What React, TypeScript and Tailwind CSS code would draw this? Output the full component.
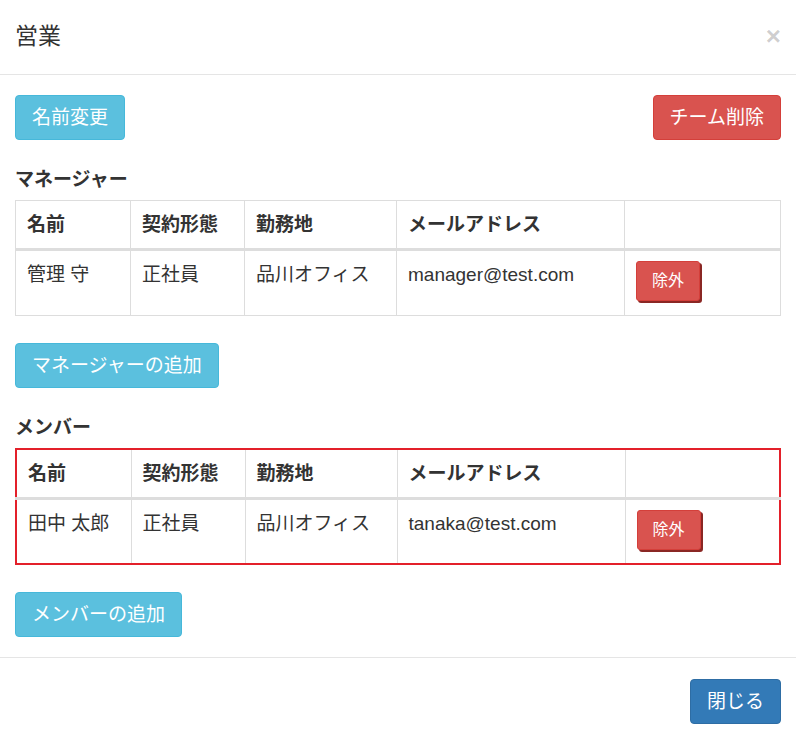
import React from "react";

type Person = { name: string; type: string; office: string; email: string };

const managers: Person[] = [
  { name: "管理 守", type: "正社員", office: "品川オフィス", email: "manager@test.com" },
];

const members: Person[] = [
  { name: "田中 太郎", type: "正社員", office: "品川オフィス", email: "tanaka@test.com" },
];

const headers = ["名前", "契約形態", "勤務地", "メールアドレス", ""];

function PeopleTable({ rows, highlight }: { rows: Person[]; highlight?: boolean }) {
  // the red frame is 1px wider, so the row gives up 1px to keep the height
  const rowH = highlight ? "h-[65px]" : "h-[66px]";
  return (
    <table
      className={
        "w-full table-fixed border-collapse " +
        (highlight ? "border-2 border-[#e3202a]" : "border border-[#ddd]")
      }
    >
      <colgroup>
        <col className="w-[115px]" />
        <col className="w-[114px]" />
        <col className="w-[152px]" />
        <col className="w-[228px]" />
        <col />
      </colgroup>
      <thead>
        <tr>
          {headers.map((h, i) => (
            <th
              key={i}
              className="border-x border-t border-b-[3px] border-[#ddd] px-[11px] py-[10px] text-left align-bottom text-[19px] font-bold leading-[27px] text-[#333]"
            >
              {h}
            </th>
          ))}
        </tr>
      </thead>
      <tbody>
        {rows.map((r) => (
          <tr key={r.email}>
            {[r.name, r.type, r.office, r.email].map((v, i) => (
              <td
                key={i}
                className={
                  rowH +
                  " border border-[#ddd] px-[11px] py-[10px] align-top text-[19px] leading-[27px] text-[#333]"
                }
              >
                {v}
              </td>
            ))}
            <td className={rowH + " border border-[#ddd] px-[11px] pt-[10px] align-top"}>
              <button className="rounded-[3px] border border-[#d43f3a] bg-[#d9534f] px-[15px] py-[8px] text-[16px] leading-[22px] text-white shadow-[2px_2px_0_#8a2724]">
                除外
              </button>
            </td>
          </tr>
        ))}
      </tbody>
    </table>
  );
}

function Btn({ children, tone }: { children: React.ReactNode; tone: "info" | "danger" | "primary" }) {
  const tones = {
    info: "bg-[#5bc0de] border-[#46b8da]",
    danger: "bg-[#d9534f] border-[#d43f3a]",
    primary: "bg-[#337ab7] border-[#2e6da4]",
  };
  return (
    <button
      className={
        "rounded-[4px] border px-[16px] py-[8px] text-[19px] leading-[27px] text-white " + tones[tone]
      }
    >
      {children}
    </button>
  );
}

export default function App() {
  return (
    <div
      className="min-h-screen w-[796px] bg-white text-[#333]"
      style={{ fontFamily: '"Liberation Sans", "Noto Sans CJK JP", sans-serif' }}
    >
      {/* header */}
      <div className="flex h-[75px] items-center justify-between border-b border-[#e5e5e5] px-[15px] pb-[3px]">
        <h4 className="text-[23px] font-normal leading-[32px] text-[#333]">営業</h4>
        <button className="text-[26px] font-bold leading-none text-black/20">×</button>
      </div>

      {/* body */}
      <div className="px-[15px] pt-[20px] pb-[20px]">
        <div className="flex items-start justify-between">
          <Btn tone="info">名前変更</Btn>
          <Btn tone="danger">チーム削除</Btn>
        </div>

        <h5 className="mt-[27px] mb-[7px] text-[19px] font-bold leading-[26px]">マネージャー</h5>
        <PeopleTable rows={managers} />

        <div className="mt-[27px]">
          <Btn tone="info">マネージャーの追加</Btn>
        </div>

        <h5 className="mt-[27px] mb-[7px] text-[19px] font-bold leading-[26px]">メンバー</h5>
        <PeopleTable rows={members} highlight />

        <div className="mt-[27px]">
          <Btn tone="info">メンバーの追加</Btn>
        </div>
      </div>

      {/* footer */}
      <div className="flex justify-end border-t border-[#e5e5e5] px-[15px] pt-[21px] pb-[15px]">
        <Btn tone="primary">閉じる</Btn>
      </div>
    </div>
  );
}
